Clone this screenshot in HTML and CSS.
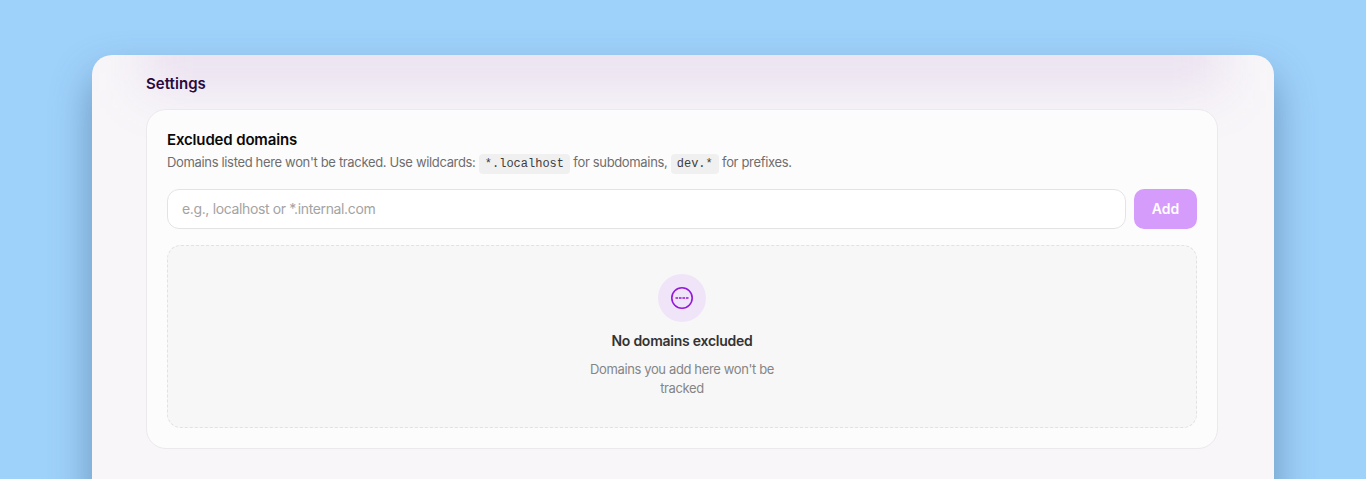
FILE: index.html
```html
<!DOCTYPE html>
<html lang="en">
<head>
    <meta charset="UTF-8">
    <meta name="viewport" content="width=device-width, initial-scale=1.0">
    <title>Settings</title>
    <link rel="stylesheet" href="styles.css">
</head>
<body>

    <div class="window">
        <main class="content">
            <h1 class="page-title">Settings</h1>

            <section class="card">
                <h2 class="card-title">Excluded domains</h2>
                <p class="card-desc">Domains listed here won't be tracked. Use wildcards: <code>*.localhost</code> for subdomains, <code>dev.*</code> for prefixes.</p>

                <form class="add-row">
                    <input class="domain-input" type="text" placeholder="e.g., localhost or *.internal.com">
                    <button class="btn-add" type="button">Add</button>
                </form>

                <div class="empty">
                    <div class="empty-icon">
                        <svg width="24" height="24" viewBox="0 0 24 24" fill="none" stroke="#9418dc" stroke-width="1.6">
                            <circle cx="12" cy="12" r="10.2"></circle>
                            <path d="M5.5 12h13" stroke-width="1.4" stroke-dasharray="2.6 .87"></path>
                        </svg>
                    </div>
                    <h3 class="empty-title">No domains excluded</h3>
                    <p class="empty-text">Domains you add here won't be tracked</p>
                </div>
            </section>
        </main>
    </div>

</body>
</html>
```

FILE: styles.css
```css
* {
    margin: 0;
    padding: 0;
    box-sizing: border-box;
}

body {
    height: 479px;
    overflow: hidden;
    background: #9fd2fb;
    font-family: Inter, "Liberation Sans", sans-serif;
    padding: 55px 92px 0;
}

/* La finestra continua oltre il bordo inferiore */
.window {
    position: relative;
    height: 600px;
    overflow: hidden;
    border-radius: 20px 20px 0 0;
    background-color: #f8f6f9;
    box-shadow: 0 20px 40px rgba(40, 70, 110, 0.45);
}

/* Alone viola in alto, dietro al contenuto */
.window::before {
    content: "";
    position: absolute;
    top: -34px;
    left: 50px;
    right: 50px;
    height: 70px;
    background: rgba(150, 90, 185, 0.13);
    filter: blur(26px);
}

.content {
    position: relative;
    padding: 20px 56px 0 54px;
}

.page-title {
    font-size: 15px;
    line-height: 18px;
    font-weight: 600;
    letter-spacing: 0.05px;
    color: #2a0a3e;
    margin-bottom: 16px;
}

.card {
    height: 340px;
    padding: 20px;
    background: rgba(255, 255, 255, 0.7);
    border: 1px solid #ebe9ec;
    border-radius: 20px;
}

.card-title {
    font-size: 15px;
    line-height: 20px;
    font-weight: 600;
    letter-spacing: -0.15px;
    color: #0a0a0a;
    margin-bottom: 2px;
}

.card-desc {
    font-size: 13px;
    line-height: 20px;
    letter-spacing: -0.34px;
    color: #6e6e6e;
    margin-bottom: 15px;
}

code {
    font-family: "Liberation Mono", monospace;
    font-size: 12px;
    letter-spacing: 0;
    color: #3c3c3c;
    background: #f0f0f0;
    padding: 3px 6px;
    border-radius: 4px;
}

.add-row {
    display: flex;
    gap: 8px;
    margin-bottom: 16px;
}

.domain-input {
    flex: 1;
    height: 40px;
    padding: 0 14px 2px;
    font-family: inherit;
    font-size: 14px;
    letter-spacing: -0.36px;
    background: #fff;
    border: 1px solid #e3e3e5;
    border-radius: 12px;
    outline: none;
}

.domain-input::placeholder {
    color: #a3a3a3;
}

.btn-add {
    width: 63px;
    height: 40px;
    padding-bottom: 2px;
    font-family: inherit;
    font-size: 14px;
    font-weight: 600;
    color: #fff;
    background: #d59cfc;
    border: none;
    border-radius: 10px;
}

.empty {
    height: 183px;
    display: flex;
    flex-direction: column;
    align-items: center;
    padding-top: 28px;
    background: #f7f7f7;
    border: 1px dashed #e2e2e2;
    border-radius: 14px;
}

.empty-icon {
    width: 48px;
    height: 48px;
    display: flex;
    align-items: center;
    justify-content: center;
    background: #f0e4f9;
    border-radius: 50%;
    margin-bottom: 9px;
}

.empty-title {
    font-size: 14px;
    line-height: 20px;
    font-weight: 600;
    letter-spacing: -0.25px;
    color: #333;
    margin-bottom: 9px;
}

.empty-text {
    width: 200px;
    font-size: 13px;
    line-height: 19px;
    letter-spacing: -0.37px;
    text-align: center;
    color: #858585;
}
```
